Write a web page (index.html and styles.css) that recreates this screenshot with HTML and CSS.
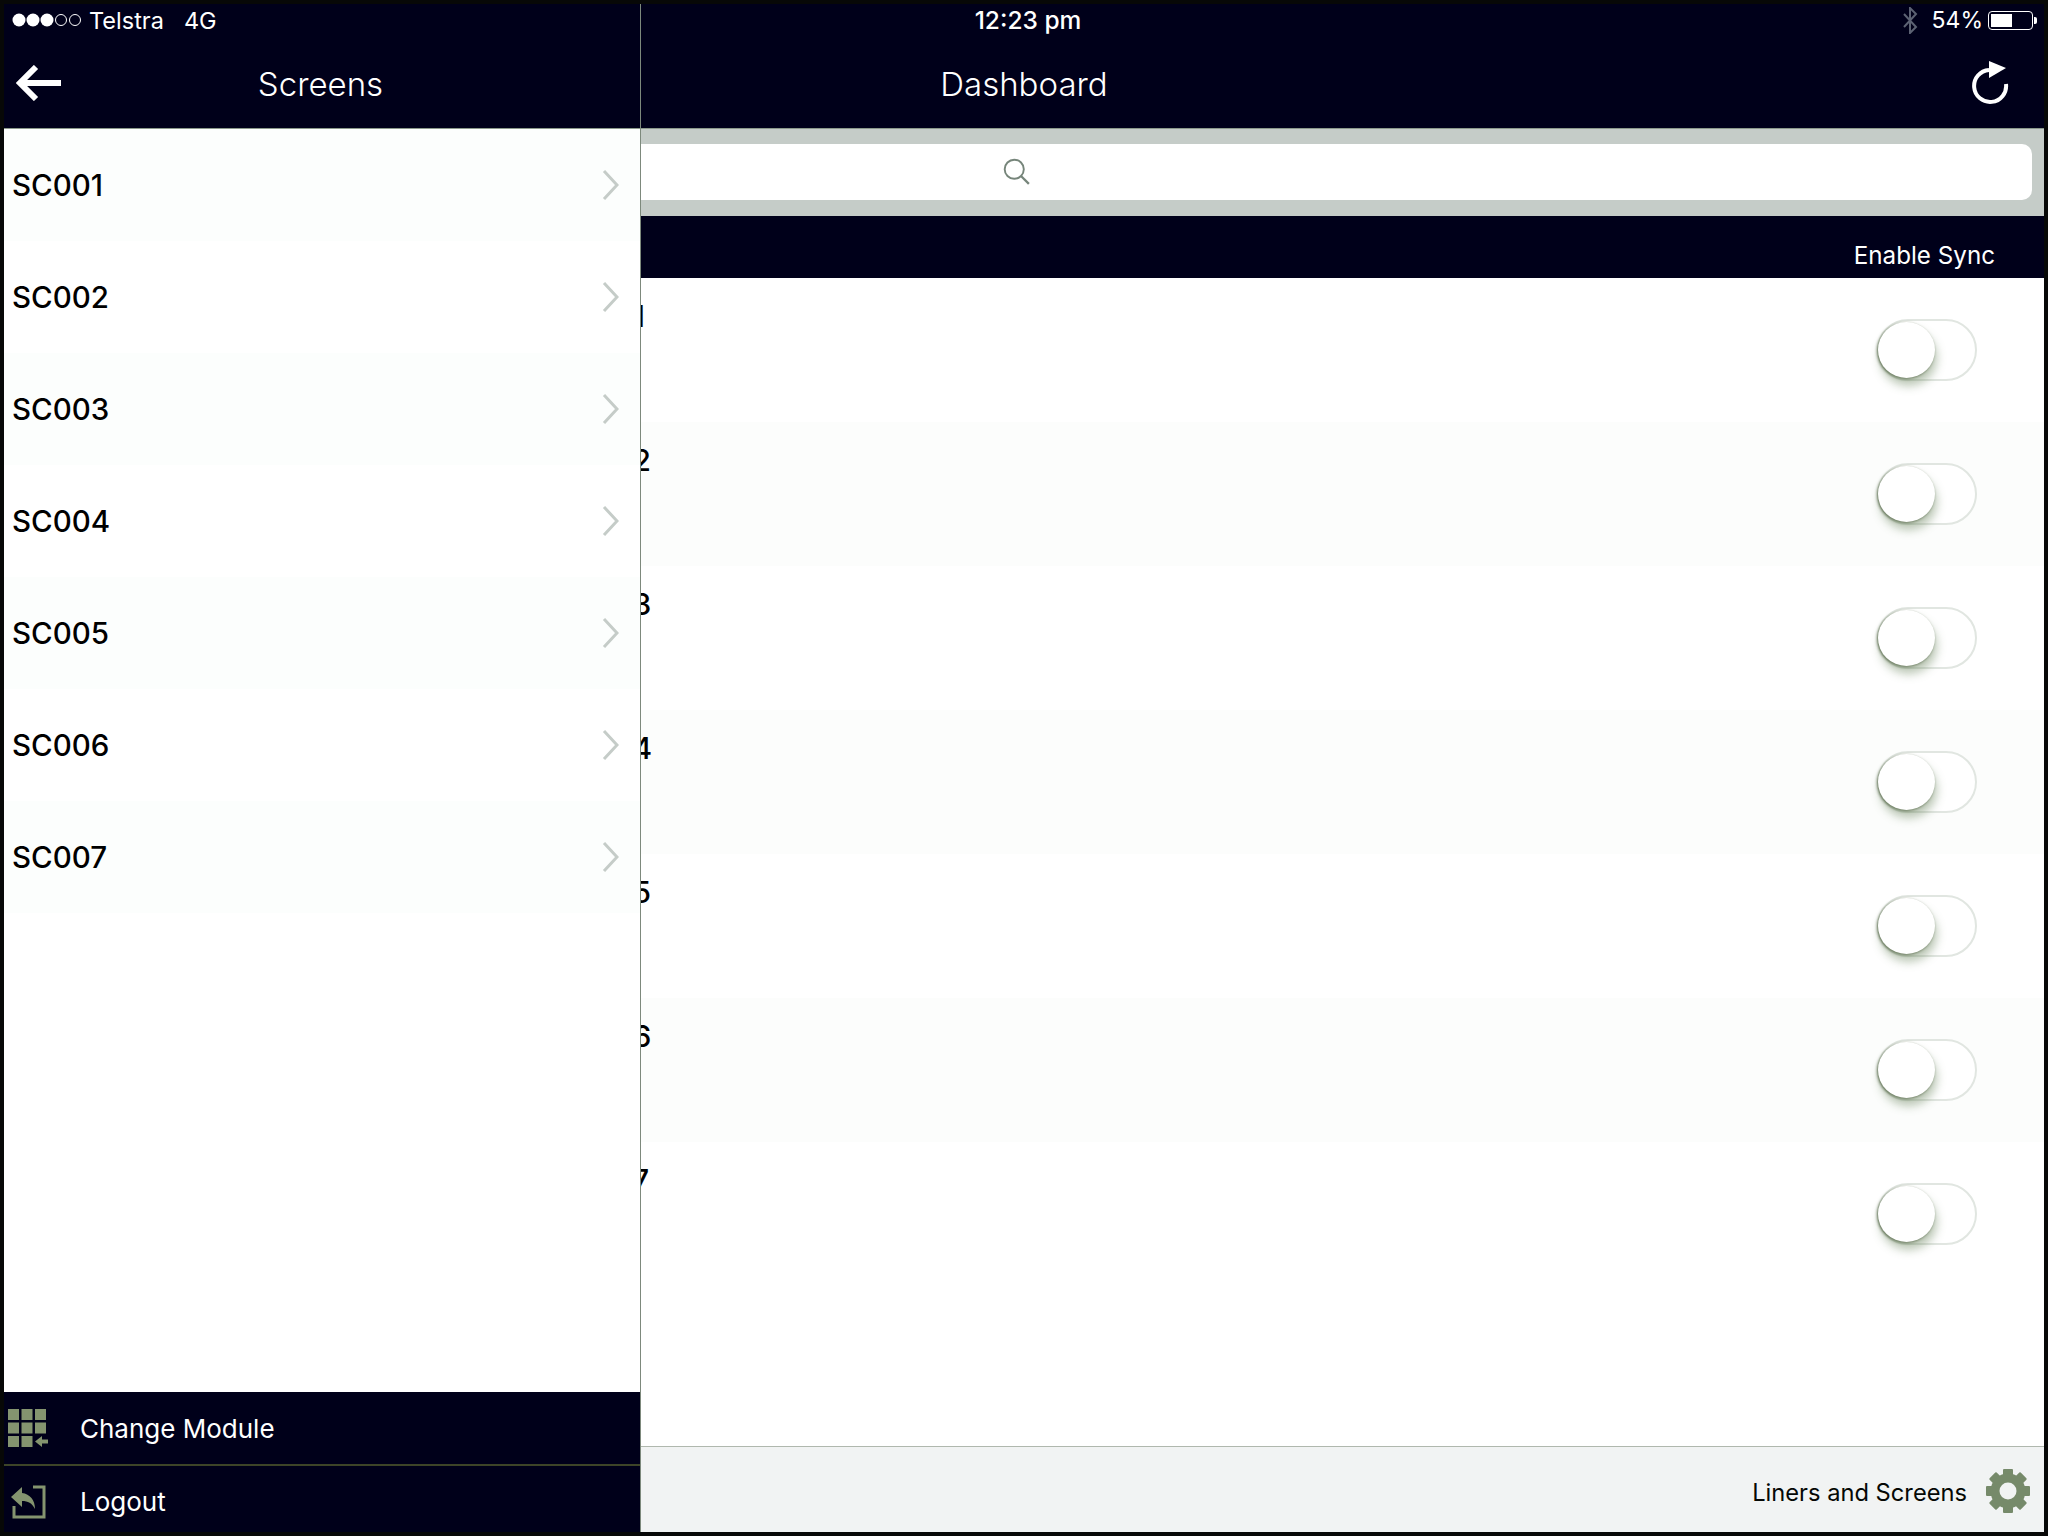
FILE: index.html
```html
<!DOCTYPE html>
<html lang="en">
<head>
  <meta charset="UTF-8">
  <title>Dashboard</title>
  <link rel="stylesheet" href="styles.css">
</head>
<body>
  <div class="screen">
    <!-- Dashboard behind the drawer -->
    <div class="main">
      <div class="status">
        <span class="status-time">12:23 pm</span>
        <div class="status-right">
          <svg class="bt-icon" width="16" height="27" viewBox="0 0 16 27"><path d="M2 7l12 13-6 6V1l6 6L2 20" fill="none" stroke="#5c6273" stroke-width="2"/></svg>
          <span class="battery-pct">54%</span>
          <div class="battery"><div class="battery-level"></div></div>
          <div class="battery-nub"></div>
        </div>
      </div>
      <div class="navbar">
        <h2>Dashboard</h2>
        <svg class="refresh" width="38" height="44" viewBox="0 0 38 44"><path d="M17 10A16 16 0 1 0 34 24" fill="none" stroke="#fff" stroke-width="4"/><path d="M17 1l17 7-17 10z" fill="#fff"/></svg>
      </div>
      <div class="search-band">
        <div class="search-field">
          <svg width="27" height="27" viewBox="0 0 24 24"><circle cx="10" cy="10" r="8.500" fill="none" stroke="#76857a" stroke-width="1.700"/><path d="M16 16l7 7" stroke="#76857a" stroke-width="2"/></svg>
        </div>
      </div>
      <div class="list-head">Enable Sync</div>
      <div class="sync-list" id="sync-list"></div>
      <div class="footer">
        <span class="footer-label">Liners and Screens</span>
        <svg width="44" height="44" viewBox="0 0 44 44">
          <g fill="#768a6a">
            <rect x="17" y="0" width="10" height="44" rx="1"/>
            <rect x="17" y="0" width="10" height="44" rx="1" transform="rotate(45 22 22)"/>
            <rect x="17" y="0" width="10" height="44" rx="1" transform="rotate(90 22 22)"/>
            <rect x="17" y="0" width="10" height="44" rx="1" transform="rotate(135 22 22)"/>
          </g>
          <circle cx="22" cy="22" r="13" fill="none" stroke="#768a6a" stroke-width="9"/>
          <circle cx="22" cy="22" r="8.500" fill="#f1f3f3"/>
        </svg>
      </div>
    </div>

    <!-- Drawer -->
    <div class="drawer">
      <div class="status drawer-status">
        <svg width="70" height="16" viewBox="0 0 70 16">
          <circle cx="7" cy="8" r="6.500" fill="#fff"/>
          <circle cx="21" cy="8" r="6.500" fill="#fff"/>
          <circle cx="35" cy="8" r="6.500" fill="#fff"/>
          <circle cx="49" cy="8" r="5.500" fill="none" stroke="#fff"/>
          <circle cx="63" cy="8" r="5.500" fill="none" stroke="#fff"/>
        </svg>
        <span class="carrier">Telstra</span>
        <span class="network">4G</span>
      </div>
      <div class="navbar drawer-nav">
        <svg class="back" width="46" height="36" viewBox="0 0 46 36"><path d="M45 18H5M20 2L4 18l16 16" fill="none" stroke="#fff" stroke-width="6"/></svg>
        <h2>Screens</h2>
      </div>
      <ul class="screen-list" id="screen-list"></ul>
      <div class="drawer-link module-link">
        <svg class="link-icon" width="40" height="38" viewBox="0 0 40 38">
          <g fill="#84946f">
            <rect width="11" height="11"/><rect x="13.500" width="11" height="11"/><rect x="27" width="11" height="11"/>
            <rect y="13.500" width="11" height="11"/><rect x="13.500" y="13.500" width="11" height="11"/><rect x="27" y="13.500" width="11" height="11"/>
            <rect y="27" width="11" height="11"/><rect x="13.500" y="27" width="11" height="11"/>
            <path d="M27 32.500l7-5.500v3.500h6v4h-6v3.500z"/>
          </g>
        </svg>
        <span>Change Module</span>
      </div>
      <div class="drawer-link logout-link">
        <svg class="link-icon" width="40" height="36" viewBox="0 0 40 36">
          <path d="M25 3h11v30H6V22" fill="none" stroke="#84946f" stroke-width="3"/>
          <path d="M3 13l11-10v6c8 1 13 7 13 16-3-6-7-8-13-8v6z" fill="#84946f"/>
        </svg>
        <span>Logout</span>
      </div>
    </div>
  </div>

  <script src="app.js"></script>
</body>
</html>
```

FILE: styles.css
```css
* {
  margin: 0;
  padding: 0;
  box-sizing: border-box;
  font-family: 'Inter', 'Liberation Sans', sans-serif;
}

body {
  background: #070807;
  padding: 4px;
  height: 1536px;
  overflow: hidden;
}

.screen {
  position: relative;
  width: 2040px;
  height: 1528px;
  overflow: hidden;
  background: #fff;
}

.main {
  display: flex;
  flex-direction: column;
  height: 100%;
}

/* Status bar */
.status {
  position: relative;
  display: flex;
  justify-content: center;
  align-items: center;
  height: 40px;
  padding-bottom: 8px;
  background: #00001a;
  color: #fff;
  font-size: 23.5px;
}

.status-time {
  font-weight: 500;
  font-size: 24.500px;
  padding-left: 8px;
}

.status-right {
  position: absolute;
  right: 7px;
  top: 0;
  height: 32px;
  display: flex;
  align-items: center;
}

.bt-icon {
  margin-right: 14px;
}

.battery-pct {
  margin-right: 5px;
  font-size: 23px;
}

.battery {
  width: 45px;
  height: 19px;
  border: 1px solid #fff;
  border-radius: 4px;
  padding: 2px;
}

.battery-level {
  width: 55%;
  height: 100%;
  background: #fff;
}

.battery-nub {
  width: 3px;
  height: 7px;
  margin-left: 1px;
  background: #fff;
  border-radius: 0 2px 2px 0;
}

/* Navbar */
.navbar {
  position: relative;
  display: flex;
  justify-content: center;
  align-items: center;
  height: 85px;
  padding-bottom: 5px;
  background: #00001a;
  color: #fff;
  border-bottom: 1px solid #8b998b;
}

.navbar h2 {
  font-size: 33px;
  font-weight: 300;
}

.drawer-nav {
  padding-right: 3px;
}

.refresh {
  position: absolute;
  right: 34px;
  top: 16px;
}

/* Search */
.search-band {
  height: 87px;
  padding: 15px 12px 16px 0;
  background: #c5ccc8;
}

.search-field {
  display: flex;
  justify-content: center;
  align-items: center;
  height: 56px;
  padding: 0 3px 1px 0;
  background: #fff;
  border-radius: 0 10px 10px 0;
}

/* Sync list */
.list-head {
  height: 62px;
  padding: 20px 49px 0 0;
  background: #00001a;
  color: #fff;
  font-size: 24.2px;
  line-height: 40px;
  text-align: right;
}

.sync-list {
  flex: 1;
}

.sync-row {
  display: flex;
  justify-content: space-between;
  align-items: center;
  height: 144px;
  padding: 0 67px 0 550px;
  background: #fff;
}

.sync-row:nth-child(even) {
  background: #fcfdfc;
}

.sync-label {
  align-self: flex-start;
  margin-top: 21px;
  font-size: 29.5px;
  font-weight: 450;
  line-height: 34px;
  color: #000;
}

.toggle {
  width: 100px;
  height: 62px;
  padding: 1px 1px 1px 0;
  border: 2px solid #e1e6e1;
  border-radius: 31px;
  background: #fff;
}

.toggle-knob {
  width: 57px;
  height: 56px;
  margin-left: -1px;
  border-radius: 50%;
  background: #fff;
  box-shadow: -1px 1px 3px #66775a, 2px 8px 10px rgba(105, 130, 90, 0.45);
}

.footer {
  display: flex;
  justify-content: flex-end;
  align-items: center;
  gap: 19px;
  height: 86px;
  padding: 2px 14px 0 0;
  background: #f1f3f3;
  border-top: 1px solid #b0b8ae;
  color: #050805;
  font-size: 23.7px;
}

.footer-label {
  padding-top: 3px;
}

/* Drawer */
.drawer {
  position: absolute;
  left: 0;
  top: 0;
  bottom: 0;
  width: 637px;
  display: flex;
  flex-direction: column;
  background: #fff;
  border-right: 1px solid #7d897c;
}

.drawer-status {
  justify-content: flex-start;
  padding-left: 8px;
}

.carrier {
  margin-left: 7px;
}

.network {
  margin-left: 20px;
}

.back {
  position: absolute;
  left: 12px;
  top: 21px;
}

.screen-list {
  flex: 1;
  list-style: none;
}

.screen-row {
  display: flex;
  justify-content: space-between;
  align-items: center;
  height: 112px;
  padding: 0 21px 0 8px;
  color: #000;
  font-size: 29.5px;
  font-weight: 450;
}

.screen-row span {
  margin-top: -1px;
}

.screen-row:nth-child(odd) {
  background: #fcfefd;
}

.drawer-link {
  display: flex;
  align-items: center;
  height: 66px;
  background: #00001a;
  color: #fff;
  font-size: 26px;
}

.module-link {
  height: 74px;
  border-bottom: 2px solid #3d4428;
}

.logout-link {
  padding-top: 5px;
}

.link-icon {
  margin-left: 4px;
  margin-right: 32px;
}
```

FILE: app.js
```js
// Rows are the same seven screens in the drawer and on the dashboard
const screens = ['SC001', 'SC002', 'SC003', 'SC004', 'SC005', 'SC006', 'SC007'];

const chevron = '<svg width="17" height="32" viewBox="0 0 17 32"><path d="M2 2l13 14L2 30" fill="none" stroke="#c5ccc8" stroke-width="3"/></svg>';

const screenList = document.getElementById('screen-list');
const syncList = document.getElementById('sync-list');

screens.forEach(name => {
  const item = document.createElement('li');
  item.className = 'screen-row';
  item.innerHTML = `<span>${name}</span>${chevron}`;
  screenList.appendChild(item);

  const row = document.createElement('div');
  row.className = 'sync-row';
  row.innerHTML = `<span class="sync-label">${name}</span><div class="toggle"><div class="toggle-knob"></div></div>`;
  syncList.appendChild(row);
});
```
